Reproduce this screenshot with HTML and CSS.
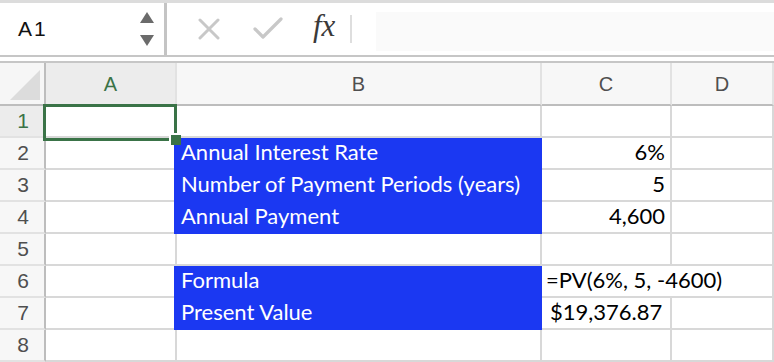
FILE: index.html
```html
<!DOCTYPE html>
<html lang="en">
<head>
    <meta charset="UTF-8">
    <title>PV Worksheet</title>
    <link rel="stylesheet" href="styles.css">
</head>
<body>
    <div class="app">
        <!-- Name box + formula bar -->
        <div class="toolbar">
            <div class="namebox">
                <span class="cell-ref">A1</span>
                <div class="spinner">
                    <svg width="14" height="11" viewBox="0 0 14 11"><path d="M7 0 L14 11 L0 11 Z" fill="#6b6b6b"/></svg>
                    <svg width="14" height="11" viewBox="0 0 14 11"><path d="M0 0 L14 0 L7 11 Z" fill="#6b6b6b"/></svg>
                </div>
            </div>
            <div class="actions">
                <svg class="icon" width="24" height="22" viewBox="0 0 24 22">
                    <path d="M3 2 L21 20 M21 2 L3 20" stroke="#c8c8c8" stroke-width="3" stroke-linecap="round"/>
                </svg>
                <svg class="icon" width="30" height="24" viewBox="0 0 30 24">
                    <path d="M2 12 L10 20 L28 2" stroke="#c8c8c8" stroke-width="3.2" fill="none" stroke-linecap="round" stroke-linejoin="round"/>
                </svg>
                <span class="fx">fx</span>
                <span class="sep"></span>
            </div>
            <div class="formula"></div>
        </div>

        <!-- Sheet grid -->
        <div class="sheet">
            <div class="corner"><span class="tri"></span></div>
            <div class="col-head active">A</div>
            <div class="col-head">B</div>
            <div class="col-head">C</div>
            <div class="col-head">D</div>

            <div class="row-head active">1</div>
            <div class="cell"></div><div class="cell"></div><div class="cell"></div><div class="cell"></div>

            <div class="row-head">2</div>
            <div class="cell"></div><div class="cell label">Annual Interest Rate</div><div class="cell num">6%</div><div class="cell"></div>

            <div class="row-head">3</div>
            <div class="cell"></div><div class="cell label">Number of Payment Periods (years)</div><div class="cell num">5</div><div class="cell"></div>

            <div class="row-head">4</div>
            <div class="cell"></div><div class="cell label">Annual Payment</div><div class="cell num">4,600</div><div class="cell"></div>

            <div class="row-head">5</div>
            <div class="cell"></div><div class="cell"></div><div class="cell"></div><div class="cell"></div>

            <div class="row-head">6</div>
            <div class="cell"></div><div class="cell label">Formula</div><div class="cell text span2">=PV(6%, 5, -4600)</div>

            <div class="row-head">7</div>
            <div class="cell"></div><div class="cell label">Present Value</div><div class="cell text money">$19,376.87</div><div class="cell"></div>

            <div class="row-head">8</div>
            <div class="cell"></div><div class="cell"></div><div class="cell"></div><div class="cell"></div>

            <div class="row-head"></div>
            <div class="cell"></div><div class="cell"></div><div class="cell"></div><div class="cell"></div>

            <!-- Selected cell A1 -->
            <div class="selection"><span class="handle"></span></div>
        </div>
    </div>
</body>
</html>
```

FILE: styles.css
```css
body {
    margin: 0;
    padding: 0;
    background: #fff;
    font-family: 'Liberation Sans', Arial, sans-serif;
}

.app {
    width: 774px;
    height: 362px;
    overflow: hidden;
}

/* Toolbar */
.toolbar {
    display: flex;
    height: 52px;
    border-top: 3px solid #dcdcdc;
    border-bottom: 2px solid #c6c6c6;
}

.namebox {
    width: 167px;
    border-right: 3px solid #c4c4c4;
    display: flex;
    align-items: center;
    justify-content: space-between;
    padding: 0 10px 0 18px;
    box-sizing: border-box;
}

.cell-ref {
    font-size: 21px;
    letter-spacing: 2px;
    color: #111;
}

.spinner {
    display: flex;
    flex-direction: column;
    gap: 12px;
}

.actions {
    display: flex;
    align-items: center;
    padding-left: 30px;
    width: 205px;
    box-sizing: border-box;
}

.actions .icon:first-child {
    margin-right: 32px;
}

.actions .icon:nth-child(2) {
    margin-right: 30px;
}

.fx {
    font-family: 'Liberation Serif', 'DejaVu Serif', serif;
    font-style: italic;
    font-size: 31px;
    color: #3a3a3a;
    margin-top: -6px;
}

.sep {
    width: 2px;
    height: 28px;
    background: #dedede;
    margin-left: 15px;
}

.formula {
    flex: 1;
    margin: 9px 0 4px 4px;
    background: #fafafa;
}

/* Sheet */
.sheet {
    position: relative;
    margin-top: 4px;
    border-top: 2px solid #c6c6c6;
    display: grid;
    grid-template-columns: 46px 131px 365px 130px 102px;
    grid-template-rows: 43px repeat(9, 32px);
}

.corner,
.col-head,
.row-head,
.cell {
    box-sizing: border-box;
}

.corner {
    position: relative;
    background: #f6f6f6;
    border-right: 2px solid #bdbdbd;
    border-bottom: 2px solid #bdbdbd;
}

.corner .tri {
    position: absolute;
    right: 4px;
    bottom: 4px;
    width: 30px;
    height: 30px;
    background: #dcdcdc;
    clip-path: polygon(100% 0, 100% 100%, 0 100%);
}

.col-head {
    background: #f7f7f7;
    border-right: 2px solid #e2e2e2;
    border-bottom: 2px solid #bdbdbd;
    display: flex;
    align-items: center;
    justify-content: center;
    font-size: 20px;
    color: #4f4f4f;
    padding-top: 2px;
}

.row-head {
    background: #f7f7f7;
    border-right: 2px solid #bdbdbd;
    border-bottom: 2px solid #e2e2e2;
    display: flex;
    align-items: center;
    justify-content: center;
    font-size: 21px;
    color: #4f4f4f;
    padding-left: 2px;
}

.col-head.active,
.row-head.active {
    background: #ececec;
    color: #3a7347;
}

.cell {
    border-right: 2px solid #d8d8d8;
    border-bottom: 2px solid #d8d8d8;
    font-family: Lato, 'Open Sans', sans-serif;
    font-size: 22px;
    color: #000;
    display: flex;
    align-items: flex-end;
    padding: 0 4px 3px 4px;
    white-space: nowrap;
}

.cell.label {
    background: #1b38f2;
    color: #fff;
    border-color: #1b38f2;
    box-shadow: -3px 0 0 #1b38f2;
}

.cell.num {
    justify-content: flex-end;
    padding-right: 5px;
}

.cell.span2 {
    grid-column: span 2;
}

.cell.money {
    padding-left: 8px;
}

/* Selection */
.selection {
    position: absolute;
    left: 43px;
    top: 41px;
    width: 134px;
    height: 37px;
    border: 3px solid #3a7347;
    box-sizing: border-box;
}

.selection .handle {
    position: absolute;
    right: -7px;
    bottom: -7px;
    width: 10px;
    height: 10px;
    background: #3a7347;
    box-shadow: -2px -2px 0 #fff;
}
```
